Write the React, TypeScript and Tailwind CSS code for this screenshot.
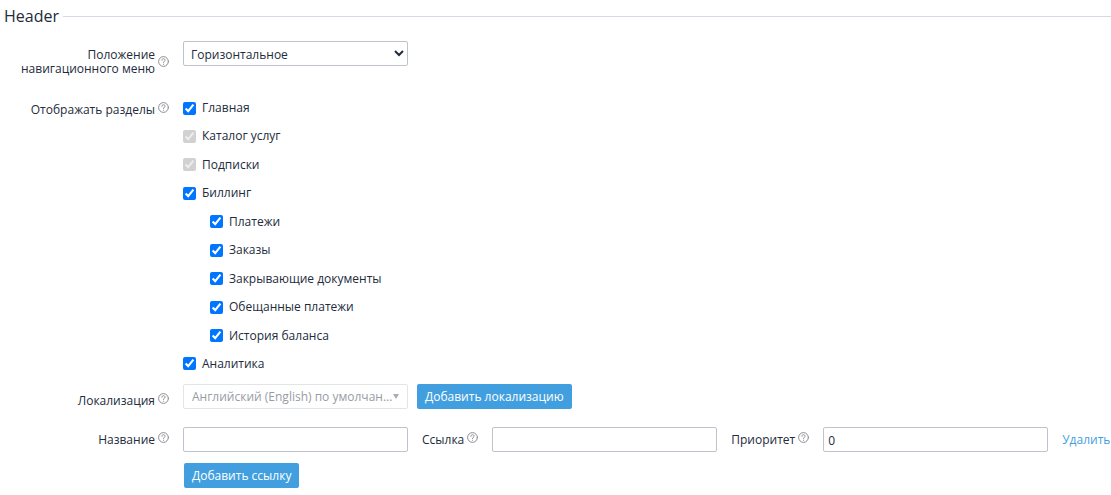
import { useState } from "react";

type Section = {
  id: string;
  title: string;
  disabled?: boolean;
  nested?: boolean;
};

const sections: Section[] = [
  { id: "main", title: "Главная" },
  { id: "catalog", title: "Каталог услуг", disabled: true },
  { id: "subscriptions", title: "Подписки", disabled: true },
  { id: "billing", title: "Биллинг" },
  { id: "payments", title: "Платежи", nested: true },
  { id: "orders", title: "Заказы", nested: true },
  { id: "documents", title: "Закрывающие документы", nested: true },
  { id: "promised", title: "Обещанные платежи", nested: true },
  { id: "history", title: "История баланса", nested: true },
  { id: "analytics", title: "Аналитика" },
];

const fieldClass =
  "h-[25px] w-[225px] shrink-0 rounded-[2px] border border-[#bfc3cc] bg-white text-[#222b3c] outline-none";

const buttonClass =
  "h-[25px] rounded-[2px] bg-[#419fdf] px-2 text-white hover:bg-[#3690cd]";

const HelpIcon = () => (
  <svg
    className="size-[11px] shrink-0"
    viewBox="0 0 11 11"
    fill="none"
    stroke="#8b8d93"
    strokeLinecap="round"
  >
    <circle cx="5.5" cy="5.5" r="4.9" />
    <path d="M3.9 4.3c0-1 .7-1.6 1.6-1.6s1.6.6 1.6 1.4c0 1.1-1.6 1.1-1.6 2.4" />
    <path d="M5.5 8.2v.1" />
  </svg>
);

const FieldLabel = ({ text, htmlFor }: { text: string; htmlFor?: string }) => (
  <div className="flex gap-[3px]">
    {htmlFor ? (
      <label htmlFor={htmlFor} className="leading-4">
        {text}
      </label>
    ) : (
      <span className="leading-4">{text}</span>
    )}
    <HelpIcon />
  </div>
);

const RowLabel = ({ text, htmlFor }: { text: string; htmlFor?: string }) => (
  <div className="flex w-[169px] shrink-0 justify-end">
    <FieldLabel text={text} htmlFor={htmlFor} />
  </div>
);

const SectionItem = ({ section }: { section: Section }) => {
  const [checked, setChecked] = useState(true);

  return (
    <label
      className={`flex h-5 items-center gap-[6px] ${section.nested ? "pl-[27px]" : ""}`}
    >
      <input
        type="checkbox"
        className="size-[13px]"
        checked={checked}
        disabled={section.disabled}
        onChange={(e) => setChecked(e.target.checked)}
      />
      {section.title}
    </label>
  );
};

const App = () => {
  return (
    <form className="font-['Open_Sans',sans-serif] text-[12px] leading-5 text-[#222b3c]">
      <div className="flex items-center gap-1 pl-1 pt-1">
        <h2 className="text-[16px] leading-6">Header</h2>
        <div className="h-px flex-1 bg-[#d5d9e4]" />
      </div>

      <div className="mt-[13px] flex items-start gap-[14px]">
        <div className="flex w-[169px] shrink-0 justify-end gap-[3px] pt-[7px]">
          <label htmlFor="menu" className="text-right leading-[14px]">
            Положение
            <br />
            навигационного меню
          </label>
          <div className="pt-2">
            <HelpIcon />
          </div>
        </div>
        <select id="menu" className={`${fieldClass} px-[3px] pt-[2px]`}>
          <option>Горизонтальное</option>
          <option>Вертикальное</option>
        </select>
      </div>

      <div className="mt-[22px] flex items-start gap-[14px]">
        <div className="pt-1">
          <RowLabel text="Отображать разделы" />
        </div>
        <div className="flex h-[276px] flex-col justify-between">
          {sections.map((section) => (
            <SectionItem key={section.id} section={section} />
          ))}
        </div>
      </div>

      <div className="mt-[10px] flex items-start gap-[14px]">
        <div className="pt-[9px]">
          <RowLabel text="Локализация" htmlFor="locale" />
        </div>
        <div className="flex gap-[9px]">
          <div className="relative">
            <select
              id="locale"
              disabled
              className={`${fieldClass} appearance-none border-[#e2e4e8] pl-2 text-[#989ca4]`}
            >
              <option>Английский (English) по умолчан...</option>
            </select>
            <svg
              className="pointer-events-none absolute right-[9px] top-[10px] h-[5px] w-[6px]"
              viewBox="0 0 6 5"
              fill="#aaadb3"
            >
              <path d="M0 0h6L3 5z" />
            </svg>
          </div>
          <button type="button" className={buttonClass}>
            Добавить локализацию
          </button>
        </div>
      </div>

      <div className="mt-[18px] flex items-center gap-[14px]">
        <RowLabel text="Название" htmlFor="name" />
        <input id="name" type="text" className={`${fieldClass} px-1`} />
        <FieldLabel text="Ссылка" htmlFor="link" />
        <input id="link" type="text" className={`${fieldClass} px-1`} />
        <FieldLabel text="Приоритет" htmlFor="priority" />
        <input
          id="priority"
          type="text"
          defaultValue="0"
          className={`${fieldClass} px-1 pt-[2px]`}
        />
        <a href="#" className="text-[#419fdf]">
          Удалить
        </a>
      </div>

      <div className="mt-[11px] pl-[184px]">
        <button type="button" className={buttonClass}>
          Добавить ссылку
        </button>
      </div>
    </form>
  );
};

export default App;
